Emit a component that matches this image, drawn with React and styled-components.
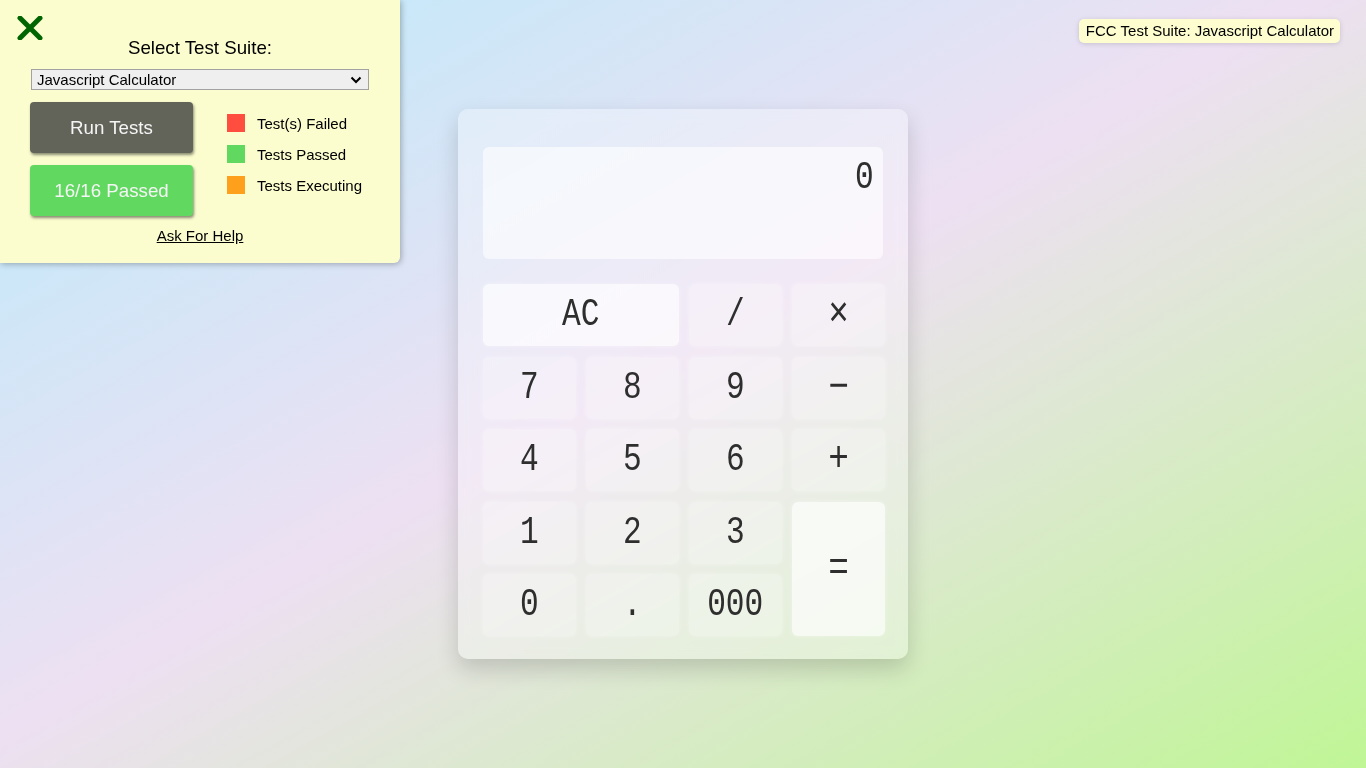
import React from "react";
import styled, { createGlobalStyle } from "styled-components";

const GlobalStyle = createGlobalStyle`
  html, body {
    margin: 0;
    padding: 0;
  }
  body {
    font-family: "Liberation Sans", Arial, sans-serif;
    background: linear-gradient(to bottom right, #bcedfe 0%, #c8e8f9 14%, #ede0f2 48%, #c0f696 100%);
    min-height: 100vh;
  }
`;

const Page = styled.div`
  min-height: 100vh;
  display: flex;
  align-items: center;
  justify-content: center;
`;

const Calculator = styled.div`
  width: 450px;
  box-sizing: border-box;
  padding: 38px 25px 23px;
  border-radius: 10px;
  background: rgba(255, 255, 255, 0.3);
  backdrop-filter: blur(6px);
  box-shadow: 0 10px 22px rgba(0, 0, 0, 0.16);
  display: flex;
  flex-direction: column;
  gap: 25px;
  font-family: "Liberation Mono", "DejaVu Sans Mono", monospace;
  color: #2e2e2e;
`;

const Display = styled.div`
  height: 112px;
  width: 400px;
  box-sizing: border-box;
  border-radius: 6px;
  background: rgba(255, 255, 255, 0.6);
  padding: 9px 7px 0 0;
  text-align: right;
  font-size: 38px;
  line-height: 44px;
`;

const Keypad = styled.div`
  display: grid;
  grid-template-columns: repeat(4, 93px);
  grid-auto-rows: 62px;
  column-gap: 10px;
  row-gap: 10.5px;
`;

const Key = styled.button`
  border: none;
  border-radius: 6px;
  font-family: inherit;
  font-size: 38px;
  color: #2e2e2e;
  padding: 0;
  display: flex;
  align-items: center;
  justify-content: center;
  grid-column: span ${(p) => p.$cols || 1};
  grid-row: span ${(p) => p.$rows || 1};
  background: ${(p) =>
    p.$light ? "rgba(255, 255, 255, 0.68)" : "rgba(255, 255, 255, 0.26)"};
  box-shadow: 0 0 4px rgba(255, 255, 255, 0.35);
  cursor: pointer;
`;

const Glyph = styled.span`
  display: inline-block;
  font-size: ${(p) => p.$size || "inherit"};
  line-height: 1;
  transform: scaleX(0.82);
`;

const Panel = styled.div`
  position: fixed;
  top: 0;
  left: 0;
  width: 400px;
  height: 263px;
  box-sizing: border-box;
  padding: 37px 30px 0;
  background: #fbfdcf;
  border-bottom-right-radius: 6px;
  box-shadow: 1px 1px 6px rgba(0, 0, 0, 0.3);
  display: flex;
  flex-direction: column;
  align-items: center;
  color: #000;
`;

const Close = styled.svg`
  position: absolute;
  top: 16px;
  left: 17px;
`;

const Title = styled.div`
  font-size: 18.72px;
  line-height: 22px;
`;

const Suite = styled.select`
  margin-top: 10px;
  width: 338px;
  height: 21px;
  padding: 0 0 0 5px;
  appearance: none;
  font-family: "Liberation Sans", Arial, sans-serif;
  font-size: 15px;
  background: #efefef
    url("data:image/svg+xml;utf8,<svg xmlns='http://www.w3.org/2000/svg' width='12' height='8' viewBox='0 0 12 8'><path d='M1.5 1.5 L6 6 L10.5 1.5' fill='none' stroke='black' stroke-width='2'/></svg>")
    no-repeat right 6px center;
  border: 1px solid #a2a2a2;
  border-radius: 0;
  color: #000;
`;

const Controls = styled.div`
  margin-top: 12px;
  align-self: stretch;
  display: flex;
  gap: 34px;
`;

const ButtonColumn = styled.div`
  display: flex;
  flex-direction: column;
  gap: 12px;
`;

const TestButton = styled.button`
  width: 163px;
  height: 51px;
  border: none;
  border-radius: 4px;
  font-family: "Liberation Sans", Arial, sans-serif;
  font-size: 18.72px;
  color: #f5f5f5;
  background: ${(p) => p.$bg};
  box-shadow: 1px 2px 3px rgba(0, 0, 0, 0.45);
`;

const Legend = styled.ul`
  list-style: none;
  margin: 12px 0 0;
  padding: 0;
  display: flex;
  flex-direction: column;
  gap: 13px;
`;

const LegendItem = styled.li`
  display: flex;
  align-items: center;
  gap: 12px;
  font-size: 15px;
  height: 18px;
`;

const Swatch = styled.span`
  width: 18px;
  height: 18px;
  background: ${(p) => p.$color};
`;

const Help = styled.a`
  margin-top: 11px;
  font-size: 15px;
  color: #000;
  text-decoration: underline;
`;

const Badge = styled.div`
  position: fixed;
  top: 19px;
  right: 26px;
  padding: 3px 6px 4px 7px;
  background: #fdfdd0;
  border-radius: 5px;
  box-shadow: 0 1px 5px rgba(0, 0, 0, 0.15);
  font-size: 15px;
  line-height: 17px;
  color: #000;
`;

const keys = [
  { id: "clear", label: "AC", cols: 2, light: true },
  { id: "divide", label: "/" },
  { id: "multiply", label: "×", size: "42px" },
  { id: "seven", label: "7" },
  { id: "eight", label: "8" },
  { id: "nine", label: "9" },
  { id: "subtract", label: "−", size: "42px" },
  { id: "four", label: "4" },
  { id: "five", label: "5" },
  { id: "six", label: "6" },
  { id: "add", label: "+", size: "42px" },
  { id: "one", label: "1" },
  { id: "two", label: "2" },
  { id: "three", label: "3" },
  { id: "equals", label: "=", rows: 2, light: true, size: "42px" },
  { id: "zero", label: "0" },
  { id: "decimal", label: "." },
  { id: "thousand", label: "000" },
];

function TestPanel() {
  return (
    <Panel>
      <Close width="26" height="24" viewBox="0 0 26 24">
        <path
          d="M3 2 L23 22 M23 2 L3 22"
          stroke="#006400"
          strokeWidth="5"
          strokeLinecap="round"
        />
      </Close>
      <Title>Select Test Suite:</Title>
      <Suite defaultValue="calc">
        <option value="calc">Javascript Calculator</option>
      </Suite>
      <Controls>
        <ButtonColumn>
          <TestButton $bg="#62645a">Run Tests</TestButton>
          <TestButton $bg="#61d961">16/16 Passed</TestButton>
        </ButtonColumn>
        <Legend>
          <LegendItem>
            <Swatch $color="#ff4d40" />
            Test(s) Failed
          </LegendItem>
          <LegendItem>
            <Swatch $color="#61d961" />
            Tests Passed
          </LegendItem>
          <LegendItem>
            <Swatch $color="#ffa01c" />
            Tests Executing
          </LegendItem>
        </Legend>
      </Controls>
      <Help href="#">Ask For Help</Help>
    </Panel>
  );
}

function App() {
  return (
    <>
      <GlobalStyle />
      <Page>
        <Calculator>
          <Display id="display">
            <Glyph>0</Glyph>
          </Display>
          <Keypad>
            {keys.map((k) => (
              <Key key={k.id} id={k.id} $cols={k.cols} $rows={k.rows} $light={k.light}>
                <Glyph $size={k.size}>{k.label}</Glyph>
              </Key>
            ))}
          </Keypad>
        </Calculator>
      </Page>
      <TestPanel />
      <Badge>FCC Test Suite: Javascript Calculator</Badge>
    </>
  );
}

export default App;
